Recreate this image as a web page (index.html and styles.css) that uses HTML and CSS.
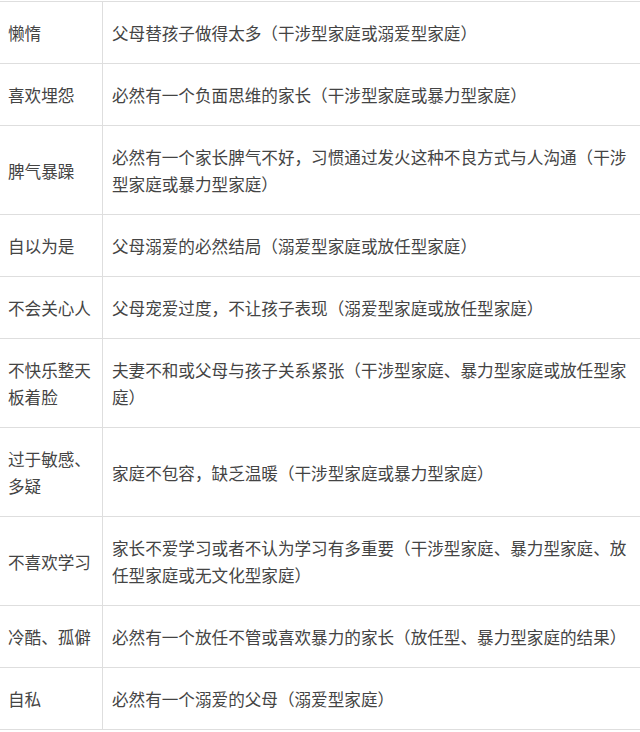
FILE: index.html
```html
<!DOCTYPE html>
<html lang="zh-CN">
<head>
<meta charset="utf-8">
<link rel="stylesheet" href="styles.css">
</head>
<body>
<div class="table">
  <div class="cell key">懒惰</div>
  <div class="cell val">父母替孩子做得太多（干涉型家庭或溺爱型家庭）</div>
  <div class="cell key">喜欢埋怨</div>
  <div class="cell val">必然有一个负面思维的家长（干涉型家庭或暴力型家庭）</div>
  <div class="cell key">脾气暴躁</div>
  <div class="cell val">必然有一个家长脾气不好，习惯通过发火这种不良方式与人沟通（干涉型家庭或暴力型家庭）</div>
  <div class="cell key">自以为是</div>
  <div class="cell val">父母溺爱的必然结局（溺爱型家庭或放任型家庭）</div>
  <div class="cell key">不会关心人</div>
  <div class="cell val">父母宠爱过度，不让孩子表现（溺爱型家庭或放任型家庭）</div>
  <div class="cell key">不快乐整天板着脸</div>
  <div class="cell val">夫妻不和或父母与孩子关系紧张（干涉型家庭、暴力型家庭或放任型家庭）</div>
  <div class="cell key">过于敏感、多疑</div>
  <div class="cell val">家庭不包容，缺乏温暖（干涉型家庭或暴力型家庭）</div>
  <div class="cell key">不喜欢学习</div>
  <div class="cell val">家长不爱学习或者不认为学习有多重要（干涉型家庭、暴力型家庭、放任型家庭或无文化型家庭）</div>
  <div class="cell key">冷酷、孤僻</div>
  <div class="cell val">必然有一个放任不管或喜欢暴力的家长（放任型、暴力型家庭的结果）</div>
  <div class="cell key">自私</div>
  <div class="cell val">必然有一个溺爱的父母（溺爱型家庭）</div>
</div>
</body>
</html>
```

FILE: styles.css
```css
html, body {
  margin: 0;
  padding: 0;
  background: #ffffff;
}
body {
  font-family: "Noto Sans CJK SC", "Microsoft YaHei", sans-serif;
  font-size: 16.6px;
  line-height: 27px;
  color: #444444;
  overflow: hidden;
}
.table {
  margin-top: 1px;
  width: 640px;
  display: grid;
  grid-template-columns: 103px 1fr;
  border-top: 1px solid #dedede;
}
.cell {
  box-sizing: border-box;
  display: flex;
  align-items: center;
  padding: 18px 8px 16px 9px;
  border-bottom: 1px solid #dedede;
}
.key {
  padding-left: 8px;
  padding-right: 8px;
  border-right: 1px solid #dedede;
}
.val {
  padding-right: 8px;
}
```
